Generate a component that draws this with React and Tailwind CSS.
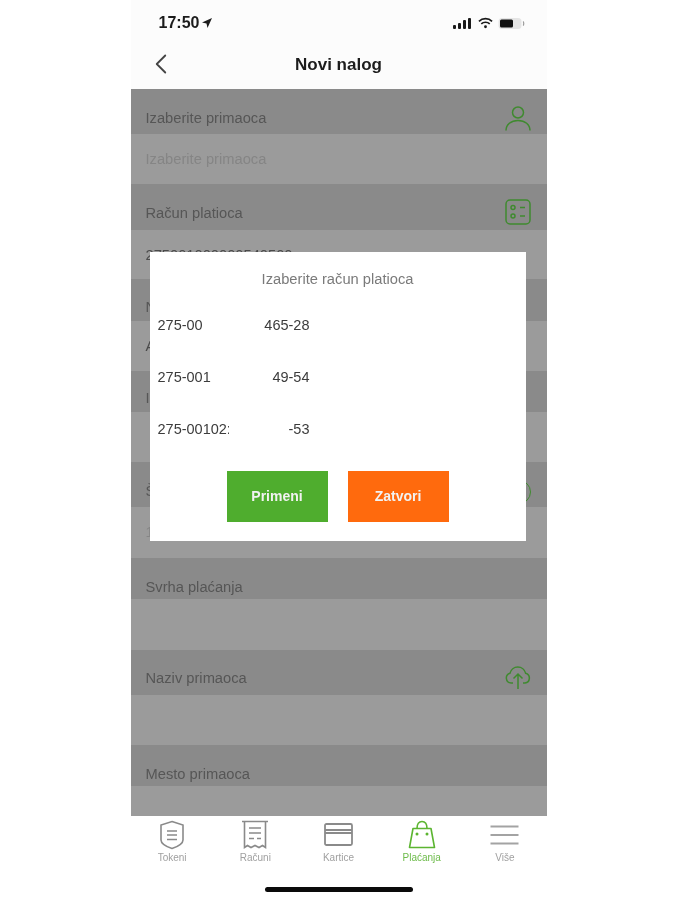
import { ChevronLeft } from "lucide-react";

const font = { fontFamily: '"Liberation Sans", Arial, sans-serif' };

function UserIcon() {
  return (
    <svg width="26" height="26" viewBox="0 0 26 26" fill="none" stroke="#3f8a2f" strokeWidth="1.5">
      <circle cx="13" cy="7.5" r="5.5" />
      <path d="M1 25.500c0-6 5-10 12-10s12 4 12 10" />
    </svg>
  );
}

function ListIcon() {
  return (
    <svg width="26" height="26" viewBox="0 0 26 26" fill="none" stroke="#3f8a2f" strokeWidth="1.5">
      <rect x="1" y="1" width="24" height="24" rx="4" />
      <circle cx="8" cy="8.5" r="2" />
      <circle cx="8" cy="17" r="2" />
      <path d="M15 8.5h5M15 17h5" />
    </svg>
  );
}

function CloudIcon() {
  return (
    <svg width="26" height="26" viewBox="0 0 26 26" fill="none" stroke="#3f8a2f" strokeWidth="1.5">
      <path d="M8 19H6a5 5 0 0 1-1-9.8 8 8 0 0 1 15.6 0A5 5 0 0 1 20 19h-2" />
      <path d="M13 25V10M8.5 14.5 13 10l4.5 4.5" />
    </svg>
  );
}

function ShieldIcon() {
  return (
    <svg width="26" height="30" viewBox="0 0 26 30" fill="none" stroke="#8a8a8a" strokeWidth="1.6">
      <path d="M13 1.500 24 5v15c0 4-5 6.500-11 8.500C7 26.500 2 24 2 20V5z" />
      <path d="M8 11h10M8 15h10M8 19.500h10" />
    </svg>
  );
}

function ReceiptIcon() {
  return (
    <svg width="28" height="30" viewBox="0 0 28 30" fill="none" stroke="#8a8a8a" strokeWidth="1.6">
      <path d="M1 1.500h26M3.500 1.500v26l3-2 3.500 2 4-2 4 2 3.500-2 3 2v-26" />
      <path d="M8 8h12M8 13h12M8 18.500h5M16 18.500h4" />
    </svg>
  );
}

function CardIcon() {
  return (
    <svg width="29" height="23" viewBox="0 0 29 23" fill="none" stroke="#8a8a8a" strokeWidth="1.8">
      <rect x="1" y="1" width="27" height="21" rx="1.500" />
      <path d="M1 7h27M1 10h27" />
    </svg>
  );
}

function BagIcon() {
  return (
    <svg width="28" height="29" viewBox="0 0 28 29" fill="none" stroke="#5cb531" strokeWidth="1.6">
      <path d="M5 8.500h18l3.500 19h-25z" strokeLinejoin="round" />
      <path d="M9 8.500c0-4.500 2-7 5-7s5 2.500 5 7" />
      <circle cx="9" cy="14" r="1.500" fill="#5cb531" stroke="none" />
      <circle cx="19" cy="14" r="1.500" fill="#5cb531" stroke="none" />
    </svg>
  );
}

function MenuIcon() {
  return (
    <svg width="29" height="20" viewBox="0 0 29 20" fill="none" stroke="#a3a3a3" strokeWidth="2">
      <path d="M0.500 1.500h28M0.500 10h28M0.500 18.500h28" />
    </svg>
  );
}

function StatusIcons() {
  return (
    <div className="flex items-center gap-[5px] pb-[3px]">
      <svg width="20" height="11" viewBox="0 0 20 11" fill="#1a1a1a">
        <rect x="0" y="7" width="3" height="4" rx="1" />
        <rect x="5" y="5" width="3" height="6" rx="1" />
        <rect x="10" y="2" width="3" height="9" rx="1" />
        <rect x="15" y="0" width="3" height="11" rx="1" />
      </svg>
      <svg width="15" height="12" viewBox="0 0 16 12" fill="none" stroke="#1a1a1a" strokeWidth="1.800">
        <path d="M1 4.200a10 10 0 0 1 14 0M3.500 7a6.500 6.500 0 0 1 9 0" />
        <circle cx="8" cy="10" r="1.500" fill="#1a1a1a" stroke="none" />
      </svg>
      <svg width="27" height="11" viewBox="0 0 27 11" fill="none">
        <rect x="0.500" y="0" width="23" height="11" rx="3.500" fill="#e5e5e5" />
        <rect x="2" y="1.500" width="13" height="8" rx="1.500" fill="#111" />
        <path d="M25 3.500c1 .5 1 3.500 0 4" stroke="#999" strokeWidth="1.200" />
      </svg>
    </div>
  );
}

// the form rows behind the dialog, dark label stripe + light value stripe
const rows = [
  { label: "Izaberite primaoca", value: "Izaberite primaoca", labelH: 45, valueH: 50, pb: 8, iconPb: 3, icon: <UserIcon />, faded: true },
  { label: "Račun platioca", value: "275001000000540500", labelH: 46, valueH: 49, pb: 9, iconPb: 5, icon: <ListIcon /> },
  { label: "Naziv platioca", value: "A", labelH: 42, valueH: 50, pb: 6 },
  { label: "Iznos", value: "", labelH: 41, valueH: 50, pb: 6 },
  { label: "Šifra plaćanja", value: "1", labelH: 45, valueH: 51, pb: 8, iconPb: 3, faded: true, icon: <span className="block h-[24px] w-[24px] rounded-full border-[1.5px] border-[#3f8a2f]" /> },
  { label: "Svrha plaćanja", value: "", labelH: 41, valueH: 51, pb: 4 },
  { label: "Naziv primaoca", value: "", labelH: 45, valueH: 50, pb: 9, iconPb: 5, icon: <CloudIcon /> },
  { label: "Mesto primaoca", value: "", labelH: 41, valueH: 30, pb: 4 },
];

const tabs = [
  { label: "Tokeni", icon: <ShieldIcon /> },
  { label: "Računi", icon: <ReceiptIcon /> },
  { label: "Kartice", icon: <CardIcon /> },
  { label: "Plaćanja", icon: <BagIcon />, active: true },
  { label: "Više", icon: <MenuIcon /> },
];

const accounts = [
  { start: "275-00", end: "465-28" },
  { start: "275-001", end: "49-54" },
  { start: "275-00102:", end: "-53" },
];

export default function App() {
  return (
    <div className="flex min-h-[900px] justify-center bg-white pl-[2px] blur-[0.5px]" style={font}>
      <div className="relative h-[900px] w-[416px] overflow-hidden bg-white">
        <div className="flex h-[47px] items-end justify-between bg-[#fcfcfc] pr-[22px] pb-[15px] pl-[28px]">
          <div className="flex items-center gap-[3px] text-[16px] leading-[18px] font-bold text-[#1c1c1c]">
            17:50
            <svg width="10" height="10" viewBox="0 0 10 10" fill="#1c1c1c">
              <path d="M10 0 0 4.500l4.500 1L5.500 10z" />
            </svg>
          </div>
          <StatusIcons />
        </div>

        <div className="relative flex h-[42px] items-start justify-center bg-[#fcfcfc]">
          <ChevronLeft className="absolute top-0 left-[13px] h-[34px] w-[34px] text-[#444]" strokeWidth={1.3} />
          <span className="pt-[8px] text-[17px] leading-[20px] font-bold text-[#1c1c1c]">Novi nalog</span>
        </div>

        <div className="flex h-[727px] flex-col overflow-hidden">
          {rows.map((row) => (
            <div key={row.label}>
              <div
                className="flex items-end justify-between bg-[#8a8a8a] pr-[16px] pl-[15px]"
                style={{ height: row.labelH }}
              >
                <span className="text-[14.700px] leading-[16px] text-[#565656]" style={{ paddingBottom: row.pb }}>
                  {row.label}
                </span>
                {row.icon ? <span className="block" style={{ paddingBottom: row.iconPb }}>{row.icon}</span> : null}
              </div>
              <div
                className={`bg-[#9b9b9b] pt-[17px] pl-[15px] text-[14.700px] leading-[16px] ${row.faded ? "text-[#858585]" : "text-[#4a4a4a]"}`}
                style={{ height: row.valueH }}
              >
                {row.value}
              </div>
            </div>
          ))}
        </div>

        <div className="flex h-[84px] flex-col bg-white">
          <div className="grid h-[62px] grid-cols-5 pt-[2px]">
            {tabs.map((tab) => (
              <div key={tab.label} className="flex flex-col items-center">
                <div className="flex h-[33px] items-center justify-center">{tab.icon}</div>
                <span className={`mt-[1px] text-[10px] leading-[12px] ${tab.active ? "text-[#6dbb4a]" : "text-[#a0a0a0]"}`}>
                  {tab.label}
                </span>
              </div>
            ))}
          </div>
          <div className="mt-[9px] flex justify-center">
            <div className="h-[5px] w-[148px] rounded-full bg-[#0a0a0a]" />
          </div>
        </div>

        <div className="absolute top-[252px] left-[19px] flex h-[289px] w-[376px] flex-col bg-white">
          <div className="pt-[19px] text-center text-[14.700px] leading-[16px] text-[#7a7a7a]">Izaberite račun platioca</div>
          <div className="mt-[30px] flex flex-col gap-[36px] pl-[8px]">
            {accounts.map((account) => (
              <div key={account.start} className="flex h-[16px] w-[152px] justify-between text-[14.500px] leading-[16px] text-[#3c3c3c]">
                <span className="w-[71px] overflow-hidden whitespace-nowrap">{account.start}</span>
                <span>{account.end}</span>
              </div>
            ))}
          </div>
          <div className="mt-[34px] flex justify-center gap-[20px]">
            <button type="button" className="h-[51px] w-[101px] bg-[#4fad2e] text-[14px] font-bold text-[#f2f2f2]">Primeni</button>
            <button type="button" className="h-[51px] w-[101px] bg-[#ff6a0d] text-[14px] font-bold text-[#f2f2f2]">Zatvori</button>
          </div>
        </div>
      </div>
    </div>
  );
}
